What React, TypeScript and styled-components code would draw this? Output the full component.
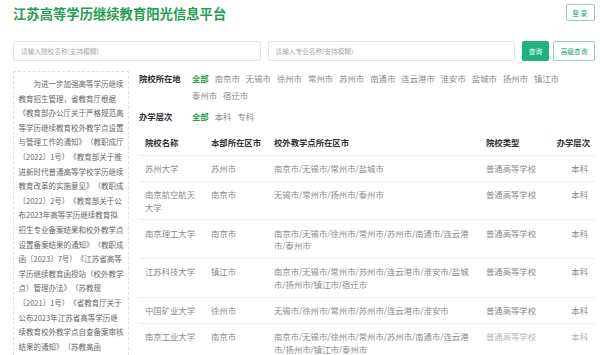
import React from 'react';
import styled, { createGlobalStyle } from 'styled-components';

const GlobalStyle = createGlobalStyle`
  html, body { margin: 0; padding: 0; background: #fff; }
  body {
    font-family: "Noto Sans CJK SC", "Noto Sans", sans-serif;
    text-spacing-trim: space-all;
  }
  * { box-sizing: border-box; }
`;

const Page = styled.div`
  width: 600px;
  height: 355px;
  overflow: hidden;
  padding: 4px 5px 0 13px;
`;

const Header = styled.header`
  display: flex;
  justify-content: space-between;
  align-items: flex-start;
`;

const Title = styled.h1`
  margin: 0;
  font-size: 13.33px;
  line-height: 20px;
  font-weight: 700;
  color: #1f9f4f;
`;

const OutlineButton = styled.button<{ $w: number }>`
  width: ${(p) => p.$w}px;
  padding: 0;
  border: 1px solid #8fd3bf;
  border-radius: 2px;
  background: #fff;
  color: #23a07c;
  font-family: inherit;
  font-size: 6.67px;
  cursor: pointer;
`;

const LoginButton = styled(OutlineButton)`
  height: 17px;
  letter-spacing: 1.5px;
`;

const SearchRow = styled.div`
  display: flex;
  align-items: stretch;
  height: 20px;
  margin-top: 17px;
`;

const SearchInput = styled.input`
  flex: 1;
  min-width: 0;
  height: 20px;
  margin-right: 7px;
  padding: 0 7px;
  border: 1px solid #e6e6e6;
  border-radius: 2px;
  font-family: inherit;
  font-size: 6.67px;
  color: #333;
  outline: none;
  &::placeholder { color: #a8a8a8; }
`;

const QueryButton = styled.button`
  width: 27px;
  margin-right: 4px;
  padding: 0;
  border: none;
  border-radius: 2px;
  background: #1eb27f;
  color: #fff;
  font-family: inherit;
  font-size: 6.67px;
  cursor: pointer;
`;

const Main = styled.div`
  display: flex;
  align-items: flex-start;
  gap: 10px;
  margin-top: 9px;
`;

const NoticePanel = styled.aside`
  flex: 0 0 116px;
  margin-top: 1px;
  padding: 5px 4.5px 20px;
  border: 1px dashed #d3e8e1;
  font-size: 7.5px;
  line-height: 14.6px;
  color: #666;
  text-indent: 15px;
`;

const Content = styled.section`
  flex: 1;
  min-width: 0;
`;

const FilterRow = styled.div<{ $gap?: number }>`
  display: flex;
  align-items: flex-start;
  margin-top: ${(p) => p.$gap ?? 0}px;
`;

const FilterLabel = styled.div`
  flex: 0 0 53px;
  font-size: 8.33px;
  line-height: 17px;
  font-weight: 700;
  color: #333;
`;

const Options = styled.div`
  display: flex;
  flex-wrap: wrap;
  column-gap: 6.1px;
  max-width: 378px;
`;

const Option = styled.span<{ $active?: boolean }>`
  font-size: 8.33px;
  line-height: 17px;
  font-weight: ${(p) => (p.$active ? 700 : 400)};
  color: ${(p) => (p.$active ? '#1fa350' : '#8a8a8a')};
  cursor: pointer;
`;

const Table = styled.table`
  width: 456px;
  margin-top: 3.5px;
  border-collapse: collapse;
  table-layout: fixed;
`;

const Col = styled.col<{ $w: number }>`
  width: ${(p) => p.$w}px;
`;

const Th = styled.th<{ $right?: boolean; $pr?: number }>`
  padding: 8px ${(p) => p.$pr ?? 6}px 6px 6px;
  font-size: 8.33px;
  line-height: 12.5px;
  font-weight: 700;
  color: #333;
  text-align: ${(p) => (p.$right ? 'right' : 'left')};
  border-bottom: 1px solid #eeeeee;
  white-space: nowrap;
`;

const Td = styled.td<{ $right?: boolean; $pr?: number; $faded?: boolean }>`
  padding: 6.5px ${(p) => p.$pr ?? 6}px 6.5px 6px;
  font-size: 8.33px;
  line-height: 12.3px;
  color: ${(p) => (p.$faded ? '#b5b5b5' : '#8a8a8a')};
  text-align: ${(p) => (p.$right ? 'right' : 'left')};
  vertical-align: top;
  border-bottom: 1px solid #eeeeee;
`;

const cities = ['南京市', '无锡市', '徐州市', '常州市', '苏州市', '南通市', '连云港市', '淮安市', '盐城市', '扬州市', '镇江市', '泰州市', '宿迁市'];
const levels = ['本科', '专科'];

const rows = [
  ['苏州大学', '苏州市', '南京市/无锡市/常州市/盐城市'],
  ['南京航空航天大学', '南京市', '无锡市/常州市/扬州市/泰州市'],
  ['南京理工大学', '南京市', '南京市/无锡市/徐州市/常州市/苏州市/南通市/连云港市/泰州市'],
  ['江苏科技大学', '镇江市', '南京市/无锡市/常州市/苏州市/连云港市/淮安市/盐城市/扬州市/镇江市/宿迁市'],
  ['中国矿业大学', '徐州市', '无锡市/徐州市/常州市/苏州市/连云港市/淮安市'],
  ['南京工业大学', '南京市', '南京市/无锡市/徐州市/常州市/苏州市/南通市/连云港市/扬州市/镇江市/泰州市'],
];

const notice =
  '为进一步加强高等学历继续教育招生管理，省教育厅根据《教育部办公厅关于严格规范高等学历继续教育校外教学点设置与管理工作的通知》（教职成厅〔2022〕1号）《教育部关于推进新时代普通高等学校学历继续教育改革的实施意见》（教职成〔2022〕2号）《教育部关于公布2023年高等学历继续教育拟招生专业备案结果和校外教学点设置备案结果的通知》（教职成函〔2023〕7号）《江苏省高等学历继续教育函授站（校外教学点）管理办法》（苏教规〔2021〕1号）《省教育厅关于公布2023年江苏省高等学历继续教育校外教学点自查备案审核结果的通知》（苏教高函';

export default function App() {
  return (
    <>
      <GlobalStyle />
      <Page>
        <Header>
          <Title>江苏高等学历继续教育阳光信息平台</Title>
          <LoginButton $w={29}>登录</LoginButton>
        </Header>

        <SearchRow>
          <SearchInput placeholder="请输入院校名称(支持模糊)" />
          <SearchInput placeholder="请输入专业名称(支持模糊)" />
          <QueryButton>查询</QueryButton>
          <OutlineButton $w={42}>高级查询</OutlineButton>
        </SearchRow>

        <Main>
          <NoticePanel>{notice}</NoticePanel>
          <Content>
            <FilterRow>
              <FilterLabel>院校所在地</FilterLabel>
              <Options>
                <Option $active>全部</Option>
                {cities.map((c) => (
                  <Option key={c}>{c}</Option>
                ))}
              </Options>
            </FilterRow>
            <FilterRow $gap={3.5}>
              <FilterLabel>办学层次</FilterLabel>
              <Options>
                <Option $active>全部</Option>
                {levels.map((l) => (
                  <Option key={l}>{l}</Option>
                ))}
              </Options>
            </FilterRow>

            <Table>
              <colgroup>
                <Col $w={66} />
                <Col $w={63} />
                <Col $w={212} />
                <Col $w={70} />
                <Col $w={45} />
              </colgroup>
              <thead>
                <tr>
                  <Th>院校名称</Th>
                  <Th>本部所在区市</Th>
                  <Th $pr={10}>校外教学点所在区市</Th>
                  <Th>院校类型</Th>
                  <Th $right $pr={5}>办学层次</Th>
                </tr>
              </thead>
              <tbody>
                {rows.map((r, i) => {
                  const faded = i === rows.length - 1;
                  return (
                    <tr key={r[0]}>
                      <Td>{r[0]}</Td>
                      <Td>{r[1]}</Td>
                      <Td $pr={10}>{r[2]}</Td>
                      <Td $faded={faded}>普通高等学校</Td>
                      <Td $right $pr={7} $faded={faded}>本科</Td>
                    </tr>
                  );
                })}
              </tbody>
            </Table>
          </Content>
        </Main>
      </Page>
    </>
  );
}
